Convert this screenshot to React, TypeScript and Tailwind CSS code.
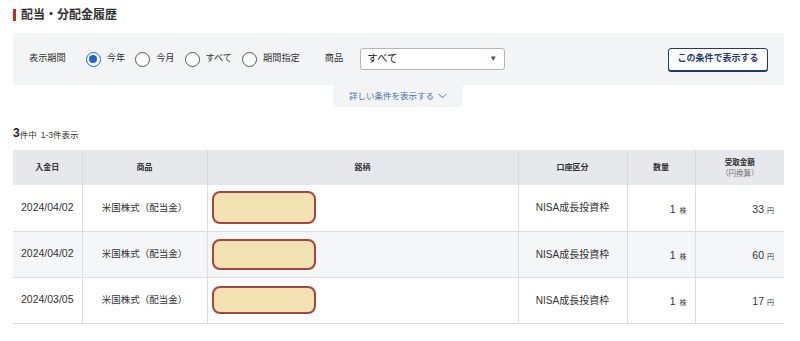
import React from "react";

const FONT = '"Liberation Sans", "Noto Sans CJK JP", Arial, sans-serif';

function Radio({ checked, label }: { checked?: boolean; label: string }) {
  return (
    <div className="flex items-center">
      {checked ? (
        <span className="flex h-[15px] w-[15px] items-center justify-center rounded-full border-[1.5px] border-[#1a66d2] bg-white">
          <span className="h-[8px] w-[8px] rounded-full bg-[#1a66d2]" />
        </span>
      ) : (
        <span className="h-[15px] w-[15px] rounded-full border-[1.5px] border-[#555] bg-white" />
      )}
      <span className="ml-[6px] text-[9.2px] text-[#333]">{label}</span>
    </div>
  );
}

function Redact({ h }: { h: number }) {
  return (
    <div
      className="w-[104px] rounded-[8px] border-2 border-[#a5453f] bg-[#f3e2b1]"
      style={{ height: h }}
    />
  );
}

const rows = [
  { date: "2024/04/02", h: 33, amt: "33", bg: "bg-white" },
  { date: "2024/04/02", h: 31, amt: "60", bg: "bg-[#f5f6f8]" },
  { date: "2024/03/05", h: 28, amt: "17", bg: "bg-white" },
];

export default function App() {
  return (
    <div className="h-[341px] w-[800px] bg-white pl-[13px] text-[#333]" style={{ fontFamily: FONT }}>
      <div className="flex h-[33px] items-center pb-[3px]">
        <span className="h-[12px] w-[3px] bg-[#c1272d]" />
        <span className="ml-[5px] text-[12px] font-bold text-[#333]">配当・分配金履歴</span>
      </div>

      <div className="flex h-[52px] w-[771px] items-center bg-[#f3f4f6] pl-[16px] pr-[16px]">
        <span className="mr-[20px] text-[9.2px] text-[#333]">表示期間</span>
        <div className="flex items-center gap-[10px]">
          <Radio checked label="今年" />
          <Radio label="今月" />
          <Radio label="すべて" />
          <Radio label="期間指定" />
        </div>
        <span className="ml-[25px] text-[9.2px] text-[#333]">商品</span>
        <div className="ml-[17px] flex h-[22px] w-[145px] items-center justify-between rounded-[3px] border border-[#b5b5b5] bg-white pl-[6px] pr-[7px]">
          <span className="text-[10.5px] text-[#222]">すべて</span>
          <span className="text-[8px] text-[#555]">▼</span>
        </div>
        <div className="ml-auto flex h-[23px] w-[100px] items-center justify-center rounded-[3px] border border-[#1d3c6b] bg-white shadow-[0_1px_0_#1d3c6b]">
          <span className="text-[9px] font-bold text-[#1d3c6b]">この条件で表示する</span>
        </div>
      </div>

      <div className="ml-[320px] flex h-[22px] w-[130px] items-center justify-center rounded-b-[3px] bg-[#f3f4f6]">
        <span className="text-[8.5px] text-[#4a6fa5]">詳しい条件を表示する</span>
        <svg className="ml-[4px]" width="9" height="6" viewBox="0 0 9 6">
          <path d="M0.5 0.8 L4.5 4.8 L8.5 0.8" fill="none" stroke="#4a6fa5" strokeWidth="1" />
        </svg>
      </div>

      <div className="mt-[20px] flex h-[12px] items-end">
        <span className="text-[12px] font-bold leading-none text-[#222]">3</span>
        <span className="text-[8.5px] leading-none text-[#333]">件中</span>
        <span className="ml-[4px] text-[8.5px] leading-none text-[#333]">1-3件表示</span>
      </div>

      <table className="mt-[11px] w-[771px] table-fixed border-collapse">
        <colgroup>
          <col style={{ width: 69 }} />
          <col style={{ width: 125 }} />
          <col style={{ width: 311 }} />
          <col style={{ width: 109 }} />
          <col style={{ width: 68 }} />
          <col style={{ width: 89 }} />
        </colgroup>
        <thead>
          <tr className="h-[35px] bg-[#e7e8ec]">
            <th className="border-r border-[#d8dade] text-center text-[8px] font-bold text-[#333]">入金日</th>
            <th className="border-r border-[#d8dade] text-center text-[8px] font-bold text-[#333]">商品</th>
            <th className="border-r border-[#d8dade] text-center text-[8px] font-bold text-[#333]">銘柄</th>
            <th className="border-r border-[#d8dade] text-center text-[8px] font-bold text-[#333]">口座区分</th>
            <th className="border-r border-[#d8dade] text-center text-[8px] font-bold text-[#333]">数量</th>
            <th className="text-center font-bold text-[#333]">
              <div className="text-[7.5px] leading-[11px]">受取金額</div>
              <div className="text-[7.5px] font-normal leading-[11px] text-[#777]">（円換算）</div>
            </th>
          </tr>
        </thead>
        <tbody>
          {rows.map((r, i) => (
            <tr key={i} className={`h-[46px] border-b border-[#dcdde0] ${r.bg}`}>
              <td className="border-r border-[#dcdde0] text-center text-[10.5px] text-[#333]">{r.date}</td>
              <td className="border-r border-[#dcdde0] text-center text-[9.5px] text-[#333]">米国株式（配当金）</td>
              <td className="border-r border-[#dcdde0] pl-[4px]">
                <Redact h={r.h} />
              </td>
              <td className="border-r border-[#dcdde0] text-center text-[10px] text-[#333]">NISA成長投資枠</td>
              <td className="border-r border-[#dcdde0] pr-[8px] text-right text-[#333]">
                <span className="text-[10.5px]">1</span>
                <span className="ml-[4px] text-[7px]">株</span>
              </td>
              <td className="pr-[10px] text-right text-[#333]">
                <span className="text-[10.5px]">{r.amt}</span>
                <span className="ml-[3px] text-[7px]">円</span>
              </td>
            </tr>
          ))}
        </tbody>
      </table>
    </div>
  );
}
